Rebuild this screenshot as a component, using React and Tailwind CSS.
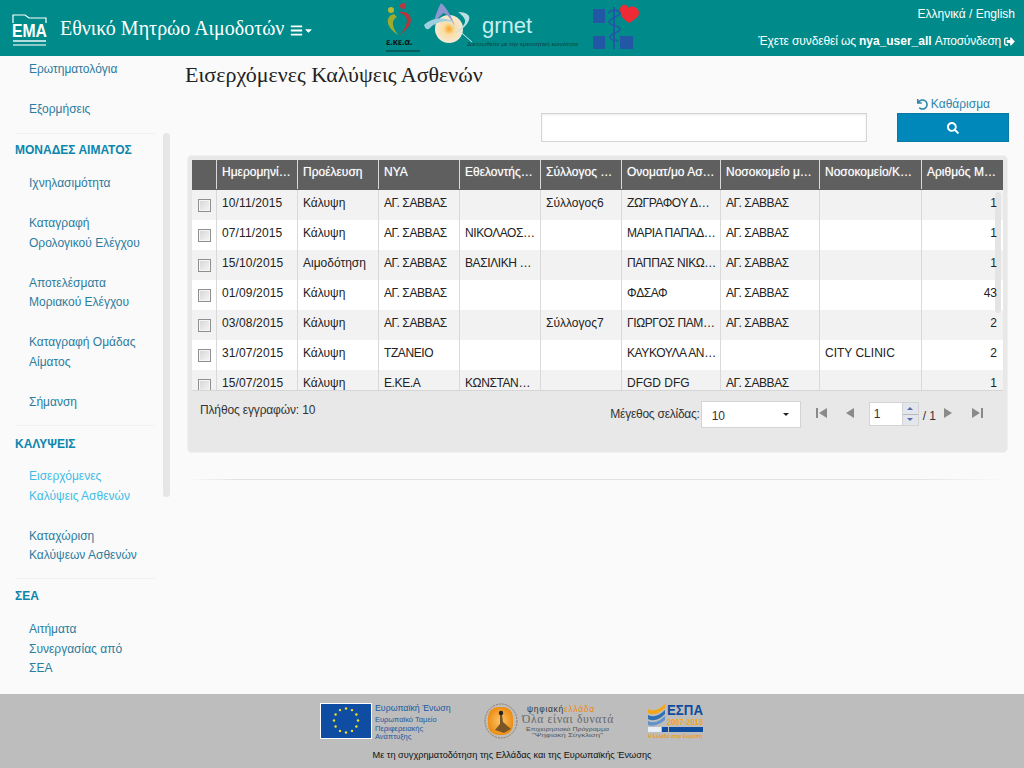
import { FaBars, FaCaretDown, FaSignOutAlt, FaUndo, FaSearch } from "react-icons/fa";

const sans = "font-['Liberation_Sans',Arial,sans-serif]";
const serif = "font-['Liberation_Serif','Times_New_Roman',serif]";

const columns = [
  "Ημερομηνία Κάλυψης",
  "Προέλευση",
  "ΝΥΑ",
  "Εθελοντής Αιμοδότης",
  "Σύλλογος Εθελοντών",
  "Ονοματ/μο Ασθενούς",
  "Νοσοκομείο με Αίτημα",
  "Νοσοκομείο/Κλινική",
  "Αριθμός Μονάδων",
];

const rows = [
  ["10/11/2015", "Κάλυψη", "ΑΓ. ΣΑΒΒΑΣ", "", "Σύλλογος6", "ΖΩΓΡΑΦΟΥ ΔΗΜΗΤΡΑ", "ΑΓ. ΣΑΒΒΑΣ", "", "1"],
  ["07/11/2015", "Κάλυψη", "ΑΓ. ΣΑΒΒΑΣ", "ΝΙΚΟΛΑΟΣ ΠΑΠΑΣ", "", "ΜΑΡΙΑ ΠΑΠΑΔΟΠΟΥΛΟΥ", "ΑΓ. ΣΑΒΒΑΣ", "", "1"],
  ["15/10/2015", "Αιμοδότηση", "ΑΓ. ΣΑΒΒΑΣ", "ΒΑΣΙΛΙΚΗ ΜΑΡΙΝΟΥ", "", "ΠΑΠΠΑΣ ΝΙΚΩΝΑΣ", "ΑΓ. ΣΑΒΒΑΣ", "", "1"],
  ["01/09/2015", "Κάλυψη", "ΑΓ. ΣΑΒΒΑΣ", "", "", "ΦΔΣΑΦ", "ΑΓ. ΣΑΒΒΑΣ", "", "43"],
  ["03/08/2015", "Κάλυψη", "ΑΓ. ΣΑΒΒΑΣ", "", "Σύλλογος7", "ΓΙΩΡΓΟΣ ΠΑΜΠΟΥΚΗΣ", "ΑΓ. ΣΑΒΒΑΣ", "", "2"],
  ["31/07/2015", "Κάλυψη", "ΤΖΑΝΕΙΟ", "", "", "ΚΑΥΚΟΥΛΑ ΑΝΑΣΤΑΣΙΑ", "", "CITY CLINIC", "2"],
  ["15/07/2015", "Κάλυψη", "Ε.ΚΕ.Α", "ΚΩΝΣΤΑΝΤΙΝΟΣ ΓΕΩΡΓΙΟΥ", "", "DFGD DFG", "ΑΓ. ΣΑΒΒΑΣ", "", "1"],
];

const gridCols = "grid grid-cols-[25px_81px_81px_81px_81px_81px_99px_99px_102px_81px]";

function NavItem({ lines, active }) {
  return (
    <a className={`block py-[10.25px] pl-[29px] pr-2 leading-[19.5px] ${active ? "text-[#3fbce6]" : "text-[#2c7c9f]"}`}>
      {lines.map((l) => (
        <div key={l}>{l}</div>
      ))}
    </a>
  );
}

function NavHeading({ children, className }) {
  return <div className={`pl-[15px] font-bold leading-[19.5px] text-[#0b86ad] ${className}`}>{children}</div>;
}

function Divider() {
  return <div className="ml-[15px] w-[140px] h-px bg-[#f1f1f1]" />;
}

function Sidebar() {
  return (
    <aside className="relative w-[170px] shrink-0 overflow-hidden text-xs">
      <div className="-mt-[6.5px]">
        <NavItem lines={["Ερωτηματολόγια"]} />
        <NavItem lines={["Εξορμήσεις"]} />
        <div className="h-[3.5px]" />
        <Divider />
        <NavHeading className="mt-[7px] mb-[3.5px]">ΜΟΝΑΔΕΣ ΑΙΜΑΤΟΣ</NavHeading>
        <NavItem lines={["Ιχνηλασιμότητα"]} />
        <NavItem lines={["Καταγραφή", "Ορολογικού Ελέγχου"]} />
        <NavItem lines={["Αποτελέσματα", "Μοριακού Ελέγχου"]} />
        <NavItem lines={["Καταγραφή Ομάδας", "Αίματος"]} />
        <NavItem lines={["Σήμανση"]} />
        <div className="h-[2.5px]" />
        <Divider />
        <NavHeading className="mt-[9px] mb-[2.5px]">ΚΑΛΥΨΕΙΣ</NavHeading>
        <NavItem active lines={["Εισερχόμενες", "Καλύψεις Ασθενών"]} />
        <NavItem lines={["Καταχώριση", "Καλύψεων Ασθενών"]} />
        <div className="h-[2px]" />
        <Divider />
        <NavHeading className="mt-[8px] mb-[3.5px]">ΣΕΑ</NavHeading>
        <NavItem lines={["Αιτήματα", "Συνεργασίας από", "ΣΕΑ"]} />
      </div>
      {/* scrollbar thumb */}
      <div className="absolute left-[163px] top-[77px] w-[7px] h-[364px] rounded bg-[#e6e6e6]" />
    </aside>
  );
}

function EmaLogo() {
  return (
    <svg width="36" height="34" viewBox="0 0 36 34" className="shrink-0 mt-[1px] overflow-visible">
      <path d="M1 9V1h12l4 3h17v5" fill="none" stroke="#fff" strokeWidth="1.2" />
      <text x="0" y="23" fontFamily="Liberation Sans" fontWeight="700" fontSize="19" textLength="35" lengthAdjust="spacingAndGlyphs" fill="#fff">EMA</text>
      <rect x="1" y="26" width="33" height="2" fill="#fff" opacity="0.7" />
      <rect x="1" y="30" width="33" height="2" fill="#fff" opacity="0.55" />
    </svg>
  );
}

function EkeaLogo() {
  return (
    <svg width="36" height="52" viewBox="0 0 36 52" className="shrink-0">
      <circle cx="6" cy="8" r="3" fill="#b6b935" />
      <circle cx="18" cy="4" r="3" fill="#b8383f" />
      <path d="M9 12C1 14-1 24 13 33 8 26 5 19 12 15z" fill="#9cab2c" />
      <path d="M14 10C26 8 28 18 24 24 21 28 17 31 14 34 19 28 24 20 21 15 19 12 16 12 14 10z" fill="#b5353a" />
      <text x="1" y="43" fontFamily="Liberation Sans" fontWeight="700" fontSize="9" fill="#111">ε.κε.α.</text>
      <rect x="1" y="48" width="34" height="2" fill="#0b4a4a" opacity="0.7" />
    </svg>
  );
}

function GrnetLogo() {
  return (
    <svg width="156" height="50" viewBox="0 0 156 50" className="shrink-0">
      <defs>
        <radialGradient id="sun">
          <stop offset="0" stopColor="#f5a623" />
          <stop offset="0.4" stopColor="#fbdca2" />
          <stop offset="1" stopColor="#f4ead6" />
        </radialGradient>
      </defs>
      <circle cx="25" cy="27" r="14" fill="url(#sun)" />
      <path d="M17 1C13 9 10 16 10 24c3-7 6-11 10-13 4 2 8 7 11 14C28 15 23 6 17 1z" fill="#8f96cf" />
      <path d="M0 23c8-8 22-8 30-3-9-2-19 0-24 6-3 3-5 0-6-3z" fill="#9dd0de" />
      <path d="M34 10c8 0 13 3 11 8-2 6-10 12-14 13 6-4 11-9 10-13-1-3-4-6-7-8z" fill="#b6e0e2" />
      <path d="M24 19l24 21" stroke="#cdeaea" strokeWidth="1" />
      <text x="58" y="31" fontFamily="Liberation Sans" fontSize="22" fill="#c8eef0">grnet</text>
      <text x="43" y="44" fontFamily="Liberation Sans" fontSize="6" textLength="111" lengthAdjust="spacingAndGlyphs" fill="#123c3c">Δικτυωθείτε με την ερευνητική κοινότητα</text>
    </svg>
  );
}

function MedicalLogo() {
  return (
    <svg width="48" height="50" viewBox="0 0 48 50" className="shrink-0">
      <rect x="1" y="9" width="12" height="14" fill="#2257a5" />
      <rect x="1" y="36" width="12" height="13" fill="#2257a5" />
      <rect x="28" y="36" width="13" height="13" fill="#2257a5" />
      <path d="M28 10c0-6 7-7 8-2 3-3 11-1 11 5 0 5-6 7-10 10-3-2-9-6-9-13z" fill="#ee2a35" />
      <path d="M22 7v42" stroke="#2257a5" strokeWidth="2" />
      <path d="M16 13c4-4 11-3 12 0s-11 5-11 9 11 3 11 7-10 4-10 8 9 2 8 5" fill="none" stroke="#2257a5" strokeWidth="1.6" />
    </svg>
  );
}

function Header() {
  return (
    <header className="h-[56px] shrink-0 bg-[#008b8a] flex items-start text-white">
      <div className="ml-[12px] mt-[13px]">
        <EmaLogo />
      </div>
      <div className={`${serif} ml-[12px] mt-[16px] text-[20px] leading-[24px] whitespace-nowrap`}>Εθνικό Μητρώο Αιμοδοτών</div>
      <div className="ml-[6px] mt-[24px] flex items-center">
        <FaBars className="text-[13px]" />
        <FaCaretDown className="text-[11px]" />
      </div>
      <div className="ml-[71px] mt-[2px]">
        <EkeaLogo />
      </div>
      <div className="ml-[3px] mt-[2px]">
        <GrnetLogo />
      </div>
      <div className="ml-[12px]">
        <MedicalLogo />
      </div>
      <div className="ml-auto mr-[9px] flex flex-col items-end text-xs">
        <div className="mt-[6px] leading-[16px]">Ελληνικά / English</div>
        <div className="mt-[11px] leading-[16px] flex items-center whitespace-nowrap">
          <span className="tracking-[-0.12px]">Έχετε συνδεθεί ως</span>
          <b className="ml-[3px]">nya_user_all</b>
          <span className="ml-[3px] tracking-[-0.25px]">Αποσύνδεση</span>
          <FaSignOutAlt className="ml-[3px] text-[11px]" />
        </div>
      </div>
    </header>
  );
}

function Checkbox() {
  return (
    <div className="w-[13px] h-[13px] border border-[#8f8f8f] bg-gradient-to-br from-[#d4d4d4] to-[#f7f7f7] shadow-[inset_0_0_0_1px_#f5f5f5]" />
  );
}

function cellTracking(value, column) {
  if (column === 0) return "tracking-[0.12px]";
  if (/[Α-Ω]/.test(value) && value === value.toUpperCase()) return "tracking-[-0.4px]";
  return "";
}

function DataTable() {
  return (
    <div>
      <div className={`${gridCols} h-[30px] bg-[#5f5f5f] text-white border-b border-[#5f5f5f]`}>
        <div className="border-r border-[#d9d9d9]" />
        {columns.map((c, i) => (
          <div key={c} className={`px-[5px] truncate leading-[24px] [text-shadow:0_0_1px_rgba(255,255,255,0.6)] ${i < columns.length - 1 ? "border-r border-[#d9d9d9]" : ""}`}>
            {c}
          </div>
        ))}
      </div>
      <div className="relative h-[201px] overflow-hidden border-b border-[#d6d6d6] text-[#222]">
        {rows.map((r, idx) => (
          <div key={r[0]} className={`${gridCols} h-[30px] ${idx % 2 === 0 ? "bg-[#f2f2f2]" : "bg-white"}`}>
            <div className="border-r border-[#d9d9d9] pl-[6px] pt-[9px]">
              <Checkbox />
            </div>
            {r.map((v, i) => (
              <div
                key={i}
                className={`truncate leading-[26px] ${cellTracking(v, i)} ${i === 8 ? "relative z-10 pl-[5px] pr-[6px] text-right" : "pl-[5px] pr-[3px] border-r border-[#d9d9d9]"}`}
              >
                {v}
              </div>
            ))}
          </div>
        ))}
        {/* scrollbar thumb */}
        <div className="absolute left-[803px] top-[2px] w-[6px] h-[121px] rounded bg-[#e4e4e4]" />
      </div>
    </div>
  );
}

function Triangle({ dir, bar }) {
  return (
    <svg width="12" height="12" viewBox="0 0 12 12" className="shrink-0">
      {dir === "left" ? <polygon points="11,1 11,11 3,6" fill="#8a8a8a" /> : <polygon points="1,1 1,11 9,6" fill="#8a8a8a" />}
      {bar && <rect x={dir === "left" ? 0 : 10} y="1" width="2" height="10" fill="#8a8a8a" />}
    </svg>
  );
}

function Pager() {
  return (
    <div className="h-[61px] flex items-start text-[#333]">
      <div className="ml-[8px] mt-[11px] leading-[16px] tracking-[-0.15px]">Πλήθος εγγραφών: 10</div>
      <div className="ml-auto mr-[20px] mt-[10px] flex items-start">
        <div className="leading-[26px] mr-px tracking-[-0.25px]">Μέγεθος σελίδας:</div>
        <div className="w-[100px] h-[27px] bg-white border border-[#d4d4d4] flex items-center pl-[10px] pr-[11px] justify-between">
          <span className="pt-[2px]">10</span>
          <span className="w-0 h-0 border-x-[3px] border-x-transparent border-t-[3px] border-t-[#222]" />
        </div>
        <div className="ml-[15px] mt-[6px]">
          <Triangle dir="left" bar />
        </div>
        <div className="ml-[15px] mt-[6px]">
          <Triangle dir="left" />
        </div>
        <div className="ml-[14px] mt-px w-[50px] h-[24px] bg-white border border-[#d4d4d4] flex items-center pl-[4px] justify-between">
          <span>1</span>
          <div className="w-[16px] h-[22px] flex flex-col border-l border-[#d4d4d4]">
            <div className="flex-1 bg-[#e4e6ee] flex items-center justify-center border-b border-[#b9b9b9]">
              <span className="w-0 h-0 border-x-[3px] border-x-transparent border-b-[3px] border-b-[#5c6ba8]" />
            </div>
            <div className="flex-1 bg-[#e4e6ee] flex items-center justify-center">
              <span className="w-0 h-0 border-x-[3px] border-x-transparent border-t-[3px] border-t-[#5c6ba8]" />
            </div>
          </div>
        </div>
        <div className="ml-[4px] leading-[30px]">/ 1</div>
        <div className="ml-[7px] mt-[6px]">
          <Triangle dir="right" />
        </div>
        <div className="ml-[16px] mt-[6px]">
          <Triangle dir="right" bar />
        </div>
      </div>
    </div>
  );
}

function Main() {
  return (
    <main className="flex-1 min-w-0 pl-[17px] pr-[16px]">
      <h1 className={`${serif} text-[22px] leading-[24px] text-[#222] mt-[7px] ml-[-2px]`}>Εισερχόμενες Καλύψεις Ασθενών</h1>
      <div className="flex justify-end items-end mt-[7px] -mr-px">
        <div className="w-[326px] h-[29px] bg-white border border-[#d4d4d4] shadow-[inset_0_1px_2px_rgba(0,0,0,0.08)]" />
        <div className="ml-[30px] w-[112px]">
          <div className="h-[19px] pt-[1px] pr-[19px] flex justify-end items-center gap-[3px] text-[#2c86ad] leading-[16px]">
            <FaUndo className="text-[11px]" />
            Καθάρισμα
          </div>
          <div className="h-[29px] bg-[#0088bb] border border-[#0a7aa3] flex items-center justify-center text-white">
            <FaSearch className="text-[12px]" />
          </div>
        </div>
      </div>
      <div className="mt-[13px] bg-[#e8e8e8] border border-[#f0f0f0] rounded-[5px] pt-[4px] pl-[4px] pr-[4px] overflow-hidden">
        <DataTable />
        <Pager />
      </div>
      <div className="mt-[26px] h-px bg-[linear-gradient(90deg,transparent,#e2e2e2_6%,#e2e2e2_88%,transparent)]" />
    </main>
  );
}

function EuLogo() {
  const stars = Array.from({ length: 12 }, (_, i) => {
    const a = (i * Math.PI) / 6;
    return [26 + 12 * Math.sin(a), 17.5 - 12 * Math.cos(a)];
  });
  return (
    <svg width="52" height="36" viewBox="0 0 52 36" className="shrink-0">
      <rect width="52" height="36" fill="#fff" />
      <rect x="1" y="1" width="50" height="34" fill="#0f4da2" />
      {stars.map(([x, y], i) => (
        <circle key={i} cx={x} cy={y} r="1.2" fill="#f4e31c" />
      ))}
    </svg>
  );
}

function DigitalGreeceLogo() {
  return (
    <svg width="131" height="38" viewBox="0 0 131 38" className="shrink-0">
      <defs>
        <radialGradient id="orange">
          <stop offset="0" stopColor="#fbc56a" />
          <stop offset="1" stopColor="#ee8f14" />
        </radialGradient>
      </defs>
      <ellipse cx="17" cy="19" rx="16" ry="17" fill="none" stroke="#7a6a50" strokeWidth="0.8" strokeDasharray="2 1" />
      <rect x="4" y="5" width="25" height="28" rx="10" fill="url(#orange)" />
      <circle cx="17" cy="11" r="2.2" fill="#222" />
      <path d="M16 13l2 0 1 7 8 7-7 4-9-3 5-6z" fill="#7a5526" />
      <text x="43" y="10" fontFamily="Liberation Sans" fontSize="8.5" letterSpacing="0.7" fill="#333">ψηφιακή<tspan fill="#ee8a10">ελλάδα</tspan></text>
      <text x="38" y="21" fontFamily="Liberation Serif" fontSize="11.5" letterSpacing="0.7" fill="#666">Όλα είναι δυνατά</text>
      <text x="42" y="29" fontFamily="Liberation Sans" fontSize="5.5" textLength="83" lengthAdjust="spacingAndGlyphs" fill="#555">Επιχειρησιακό Πρόγραμμα</text>
      <text x="48" y="35" fontFamily="Liberation Sans" fontSize="5.5" textLength="71" lengthAdjust="spacingAndGlyphs" fill="#555">"Ψηφιακή Σύγκλιση"</text>
    </svg>
  );
}

function EspaLogo() {
  return (
    <svg width="56" height="36" viewBox="0 0 56 36" className="shrink-0">
      <path d="M1 6c6 3 12 0 17-5v4C13 10 7 13 1 10z" fill="#f2a71b" />
      <path d="M1 12c6 3 12 0 17-5v4C13 16 7 19 1 16z" fill="#2f6fb3" />
      <path d="M1 18c6 3 12 0 17-5v4c-5 4-11 7-17 5z" fill="#5f93c9" />
      <text x="20" y="12" fontFamily="Liberation Sans" fontWeight="700" fontSize="15" textLength="36" lengthAdjust="spacingAndGlyphs" fill="#0f4d9c">ΕΣΠΑ</text>
      <text x="20" y="22" fontFamily="Liberation Sans" fontWeight="700" fontSize="9.5" textLength="36" lengthAdjust="spacingAndGlyphs" fill="#f2a71b">2007-2013</text>
      <rect x="1" y="24" width="13" height="5" fill="#e8eef5" />
      <rect x="15" y="24" width="6" height="5" fill="#0f4d9c" />
      <rect x="22" y="24" width="34" height="5" fill="#0f4d9c" />
      <text x="1" y="35" fontFamily="Liberation Sans" fontWeight="700" fontSize="4.5" textLength="54" lengthAdjust="spacingAndGlyphs" fill="#ee9a1a">Η Ελλάδα στην Ευρώπη</text>
    </svg>
  );
}

function Footer() {
  return (
    <footer className="h-[74px] shrink-0 bg-[#bdbdbd] flex flex-col items-center">
      <div className="mt-[9px] h-[38px] flex items-start -ml-[1px]">
        <EuLogo />
        <div className="ml-[3px] w-[85px] text-[#1a5ba0] text-[7.5px] leading-[8.5px] whitespace-nowrap">
          <div className="text-[8.8px] leading-[10px] mb-[3px]">Ευρωπαϊκή Ένωση</div>
          <div>Ευρωπαϊκό Ταμείο</div>
          <div>Περιφερειακής</div>
          <div>Ανάπτυξης</div>
        </div>
        <div className="ml-[24px] -mt-[1px]">
          <DigitalGreeceLogo />
        </div>
        <div className="ml-[32px]">
          <EspaLogo />
        </div>
      </div>
      <div className="mt-[7px] text-[9.2px] leading-[14px] text-[#111]">Με τη συγχρηματοδότηση της Ελλάδας και της Ευρωπαϊκής Ένωσης</div>
    </footer>
  );
}

export default function App() {
  return (
    <div className={`${sans} h-[768px] w-[1024px] overflow-hidden flex flex-col bg-[#fafafa] text-xs`}>
      <Header />
      <div className="flex-1 min-h-0 flex overflow-hidden">
        <Sidebar />
        <Main />
      </div>
      <Footer />
    </div>
  );
}
